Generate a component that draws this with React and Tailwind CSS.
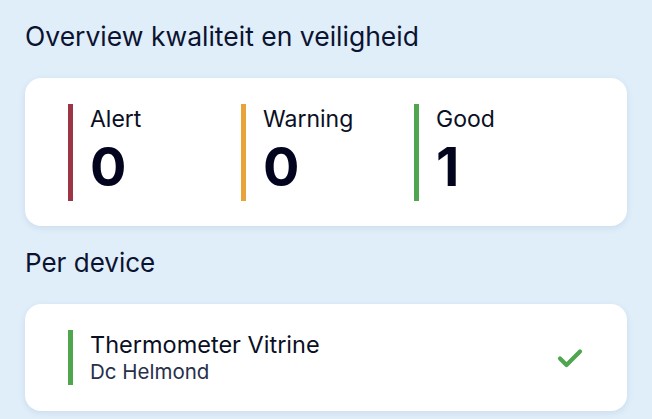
import React from 'react'

const SUMMARY = [
  { label: 'Alert',   count: 0, color: 'bg-[#9c3545]' },
  { label: 'Warning', count: 0, color: 'bg-[#e9a33b]' },
  { label: 'Good',    count: 1, color: 'bg-[#4fa64f]' },
]

const DEVICES = [
  { name: 'Thermometer Vitrine', location: 'Dc Helmond', color: 'bg-[#4fa64f]' },
]

function SummaryItem({ label, count, color }) {
  return (
    <div className="flex w-[173px] items-stretch">
      <div className={`w-[5px] h-[97px] ${color}`} />
      <div className="ml-[17px] flex flex-col">
        <span className="text-[23px] leading-[28px] mt-[1px] text-[#0a0f24]">{label}</span>
        <span className="text-[54px] leading-[54px] mt-[7px] font-bold text-[#03051e]">{count}</span>
      </div>
    </div>
  )
}

function DeviceRow({ name, location, color }) {
  return (
    <div className="h-[107px] rounded-2xl bg-white shadow-[0_2px_6px_rgba(60,90,130,0.12)] flex items-center pl-[43px] pr-[44px]">
      <div className={`w-[5px] h-[55px] ${color}`} />
      <div className="ml-[17px] flex flex-col flex-1">
        <span className="text-[23.5px] leading-[28px] text-[#0a0f24]">{name}</span>
        <span className="text-[20.5px] leading-[26px] text-[#27304a]">{location}</span>
      </div>
      <svg width="26" height="20" viewBox="0 0 26 20" aria-hidden="true">
        <path d="M3 10.5 L9.5 17 L23 3.5" fill="none" stroke="#4fa64f" strokeWidth="4.2" strokeLinecap="round" strokeLinejoin="round" />
      </svg>
    </div>
  )
}

export default function App() {
  return (
    <div className="w-[652px] h-[419px] overflow-hidden bg-[#e0eefa] px-[25px] font-['Inter',sans-serif]">
      <h1 className="pt-[19px] text-[26.5px] leading-[34px] text-[#0c1330]">Overview kwaliteit en veiligheid</h1>

      {/* ── Summary ───────────────────────────── */}
      <div className="mt-[25px] h-[148px] rounded-2xl bg-white shadow-[0_2px_6px_rgba(60,90,130,0.12)] flex items-center pl-[43px]">
        {SUMMARY.map(s => <SummaryItem key={s.label} {...s} />)}
      </div>

      <h2 className="mt-[20px] text-[26px] leading-[34px] text-[#0c1330]">Per device</h2>

      {/* ── Devices ───────────────────────────── */}
      <div className="mt-[24px] flex flex-col gap-4">
        {DEVICES.map(d => <DeviceRow key={d.name} {...d} />)}
      </div>
    </div>
  )
}
